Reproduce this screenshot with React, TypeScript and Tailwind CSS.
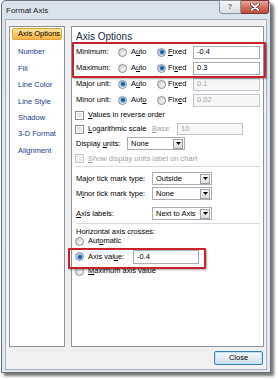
import React from "react";

const NAV = ["Number", "Fill", "Line Color", "Line Style", "Shadow", "3-D Format", "Alignment"];

function U({ children }: { children: React.ReactNode }) {
  return <span className="underline decoration-[0.8px] underline-offset-[1px]">{children}</span>;
}

function Radio({ on }: { on?: boolean }) {
  return (
    <span className="flex h-[9px] w-[9px] shrink-0 items-center justify-center rounded-full border border-[#8a8c90] bg-gradient-to-br from-[#cfd1d4] to-[#fbfbfb]">
      {on && <span className="h-[4px] w-[4px] rounded-full bg-[#1d5fa6] shadow-[0_0_1px_1px_#7db6e6]" />}
    </span>
  );
}

function Check({ disabled }: { disabled?: boolean }) {
  return (
    <span
      className={`flex h-[9px] w-[9px] shrink-0 items-center justify-center border ${
        disabled ? "border-[#c4c6c8] bg-[#f4f4f4]" : "border-[#8a8c90] bg-white"
      }`}
    >
      <span className={`h-[5px] w-[5px] ${disabled ? "bg-[#ececec]" : "bg-gradient-to-br from-[#d6d8da] to-[#f6f6f6]"}`} />
    </span>
  );
}

function Input({ value, w, disabled, h = "h-[13px]" }: { value: string; w: string; disabled?: boolean; h?: string }) {
  return (
    <div
      className={`flex ${h} ${w} items-center border pl-[3px] ${
        disabled ? "border-[#c2c7cf] bg-[#f7f7f7] text-[#a3a3a3]" : "border-[#abadb3] bg-white text-black"
      }`}
    >
      {value}
    </div>
  );
}

function Drop({ value, w }: { value: string; w: string }) {
  return (
    <div className={`flex h-[13px] ${w} items-center border border-[#abadb3] bg-white`}>
      <span className="flex-1 pl-[3px]">{value}</span>
      <span className="mr-[1px] flex h-[10px] w-[10px] items-center justify-center border border-[#9da1a8] bg-gradient-to-b from-[#f7f7f7] to-[#dcdcdc]">
        <svg width="5" height="3" viewBox="0 0 5 3">
          <path d="M0 0h5L2.5 3z" fill="#000" />
        </svg>
      </span>
    </div>
  );
}

function AutoFixed({
  label,
  fixedOn,
  value,
  auto,
  fixed,
}: {
  label: React.ReactNode;
  fixedOn: boolean;
  value: string;
  auto: React.ReactNode;
  fixed: React.ReactNode;
}) {
  return (
    <div className="flex h-[16px] items-center pl-[4px]">
      <span className="w-[42px]">{label}</span>
      <Radio on={!fixedOn} />
      <span className="ml-[4px] w-[26px]">{auto}</span>
      <Radio on={fixedOn} />
      <span className="ml-[2px] w-[25px]">{fixed}</span>
      <Input value={value} w="w-[67px]" disabled={!fixedOn} />
    </div>
  );
}

export default function App() {
  return (
    <div className="relative h-[380px] w-[278px] overflow-hidden bg-white font-['Liberation_Sans',Arial,sans-serif] text-[7.5px] leading-none text-black">
      <div className="ml-[1px] flex h-[373px] w-[270px] flex-col rounded-t-[5px] border border-[#6b7078] bg-gradient-to-b from-[#d9e2eb] via-[#e4e9ef] to-[#e0e6ec] shadow-[3px_3px_3px_rgba(0,0,0,0.55)]">
        {/* title bar */}
        <div className="flex h-[18px] items-start justify-between pl-[4px] pr-[1px]">
          <span className="mt-[6px] text-[8px] text-[#1a1a1a]">Format Axis</span>
          <div className="-mt-[1px] flex">
            <div className="flex h-[14px] w-[22px] items-center justify-center rounded-bl-[3px] border border-[#8a939e] bg-gradient-to-b from-[#f5f7f9] to-[#dbe0e6] text-[8px] font-bold text-[#6b737d]">
              ?
            </div>
            <div className="flex h-[14px] w-[28px] items-center justify-center rounded-br-[3px] border border-l-0 border-[#7a3a34] bg-gradient-to-b from-[#e9a99c] via-[#d0705f] to-[#c44a37]">
              <svg width="10" height="8" viewBox="0 0 10 8">
                <path d="M1.5 1l7 6M8.5 1l-7 6" stroke="#5a2a25" strokeWidth="3" strokeLinecap="round" />
                <path d="M1.5 1l7 6M8.5 1l-7 6" stroke="#fff" strokeWidth="1.7" strokeLinecap="round" />
              </svg>
            </div>
          </div>
        </div>

        {/* client area */}
        <div className="mx-[3px] mb-[2px] flex flex-1 flex-col border border-[#a7b0bb] bg-[#f0f0f0] pl-[3px] pr-[1px] pt-[6px]">
          <div className="flex h-[321px] gap-[6px]">
            {/* nav */}
            <div className="flex w-[56px] flex-col border border-[#8e939b] bg-white pt-[1px]">
              <div className="mx-[2px] flex h-[12px] items-center rounded-[2px] border border-[#e0a33d] bg-gradient-to-b from-[#fee9a8] via-[#fcc965] to-[#f8b546] pl-[5px] text-black">
                Axis Options
              </div>
              <div className="mt-[4px] flex flex-col">
                {NAV.map((n) => (
                  <div key={n} className="flex h-[16.4px] items-center pl-[8px] text-[#1d3a8a]">
                    {n}
                  </div>
                ))}
              </div>
            </div>

            {/* panel */}
            <div className="flex w-[193px] flex-col border border-[#8e939b] bg-white">
              <div className="flex h-[17px] items-center pl-[4px] pt-[2px] text-[10px] text-[#1a2b48]">Axis Options</div>
              <AutoFixed label="Minimum:" fixedOn value="-0.4" auto={<>A<U>u</U>to</>} fixed={<><U>F</U>ixed</>} />
              <AutoFixed label="Maximum:" fixedOn value="0.3" auto={<>A<U>u</U>to</>} fixed={<>Fi<U>x</U>ed</>} />
              <AutoFixed label="Major unit:" fixedOn={false} value="0.1" auto={<>A<U>u</U>to</>} fixed={<>Fi<U>x</U>ed</>} />
              <AutoFixed label="Minor unit:" fixedOn={false} value="0.02" auto={<>Aut<U>o</U></>} fixed={<>Fix<U>e</U>d</>} />

              <div className="flex h-[14px] items-center pl-[3px]">
                <Check />
                <span className="ml-[4px]">
                  <U>V</U>alues in reverse order
                </span>
              </div>
              <div className="flex h-[14px] items-center pl-[3px]">
                <Check />
                <span className="ml-[4px] w-[64px]">
                  <U>L</U>ogarithmic scale
                </span>
                <span className="w-[25px] text-[#a3a3a3]">
                  <U>B</U>ase:
                </span>
                <Input value="10" w="w-[66px]" h="h-[12px]" disabled />
              </div>
              <div className="flex h-[15px] items-center pl-[4px]">
                <span className="w-[51px]">
                  Display <U>u</U>nits:
                </span>
                <Drop value="None" w="w-[58px]" />
              </div>
              <div className="flex h-[15px] items-center pl-[3px] text-[#a3a3a3]">
                <Check disabled />
                <span className="ml-[4px]">
                  <U>S</U>how display units label on chart
                </span>
              </div>
              <div className="ml-[4px] mr-[3px] h-px bg-[#d5dbe1]" />

              <div className="mt-[4px] flex h-[15px] items-center pl-[4px]">
                <span className="w-[76px]">
                  Ma<U>j</U>or tick mark type:
                </span>
                <Drop value="Outside" w="w-[60px]" />
              </div>
              <div className="flex h-[15px] items-center pl-[4px]">
                <span className="w-[76px]">
                  M<U>i</U>nor tick mark type:
                </span>
                <Drop value="None" w="w-[60px]" />
              </div>
              <div className="mt-[5px] flex h-[15px] items-center pl-[4px]">
                <span className="w-[76px]">
                  <U>A</U>xis labels:
                </span>
                <Drop value="Next to Axis" w="w-[60px]" />
              </div>
              <div className="ml-[4px] mr-[3px] mt-[2px] h-px bg-[#d5dbe1]" />

              <div className="flex h-[11px] items-end pl-[4px]">Horizontal axis crosses:</div>
              <div className="mt-[1px] flex h-[10px] items-center pl-[3px]">
                <Radio />
                <span className="ml-[4px]">Aut<U>o</U>matic</span>
              </div>
              <div className="mt-[3px] flex h-[15px] items-center pl-[3px]">
                <Radio on />
                <span className="ml-[4px] w-[45px]">
                  Axis val<U>u</U>e:
                </span>
                <Input value="-0.4" w="w-[66px]" h="h-[14px]" />
              </div>
              <div className="mt-[2px] flex h-[10px] items-center pl-[3px]">
                <Radio />
                <span className="ml-[4px]">
                  <U>M</U>aximum axis value
                </span>
              </div>
            </div>
          </div>

          <div className="mt-[4px] flex justify-end pr-[2px]">
            <div className="flex h-[14px] w-[49px] items-center justify-center rounded-[2px] border border-[#3c7fb1] bg-gradient-to-b from-[#f2f6f9] via-[#e6edf2] to-[#cfdbe4] shadow-[inset_0_0_0_1px_#bfe4f7]">
              Close
            </div>
          </div>
        </div>
      </div>

      {/* red annotation boxes */}
      <div className="absolute left-[72px] top-[42px] h-[36px] w-[194px] rounded-[1px] border-2 border-[#c8232c] shadow-[1px_1px_2px_rgba(0,0,0,0.35)]" />
      <div className="absolute left-[68px] top-[248px] h-[21px] w-[138px] rounded-[1px] border-2 border-[#c8232c] shadow-[1px_1px_2px_rgba(0,0,0,0.35)]" />
    </div>
  );
}
